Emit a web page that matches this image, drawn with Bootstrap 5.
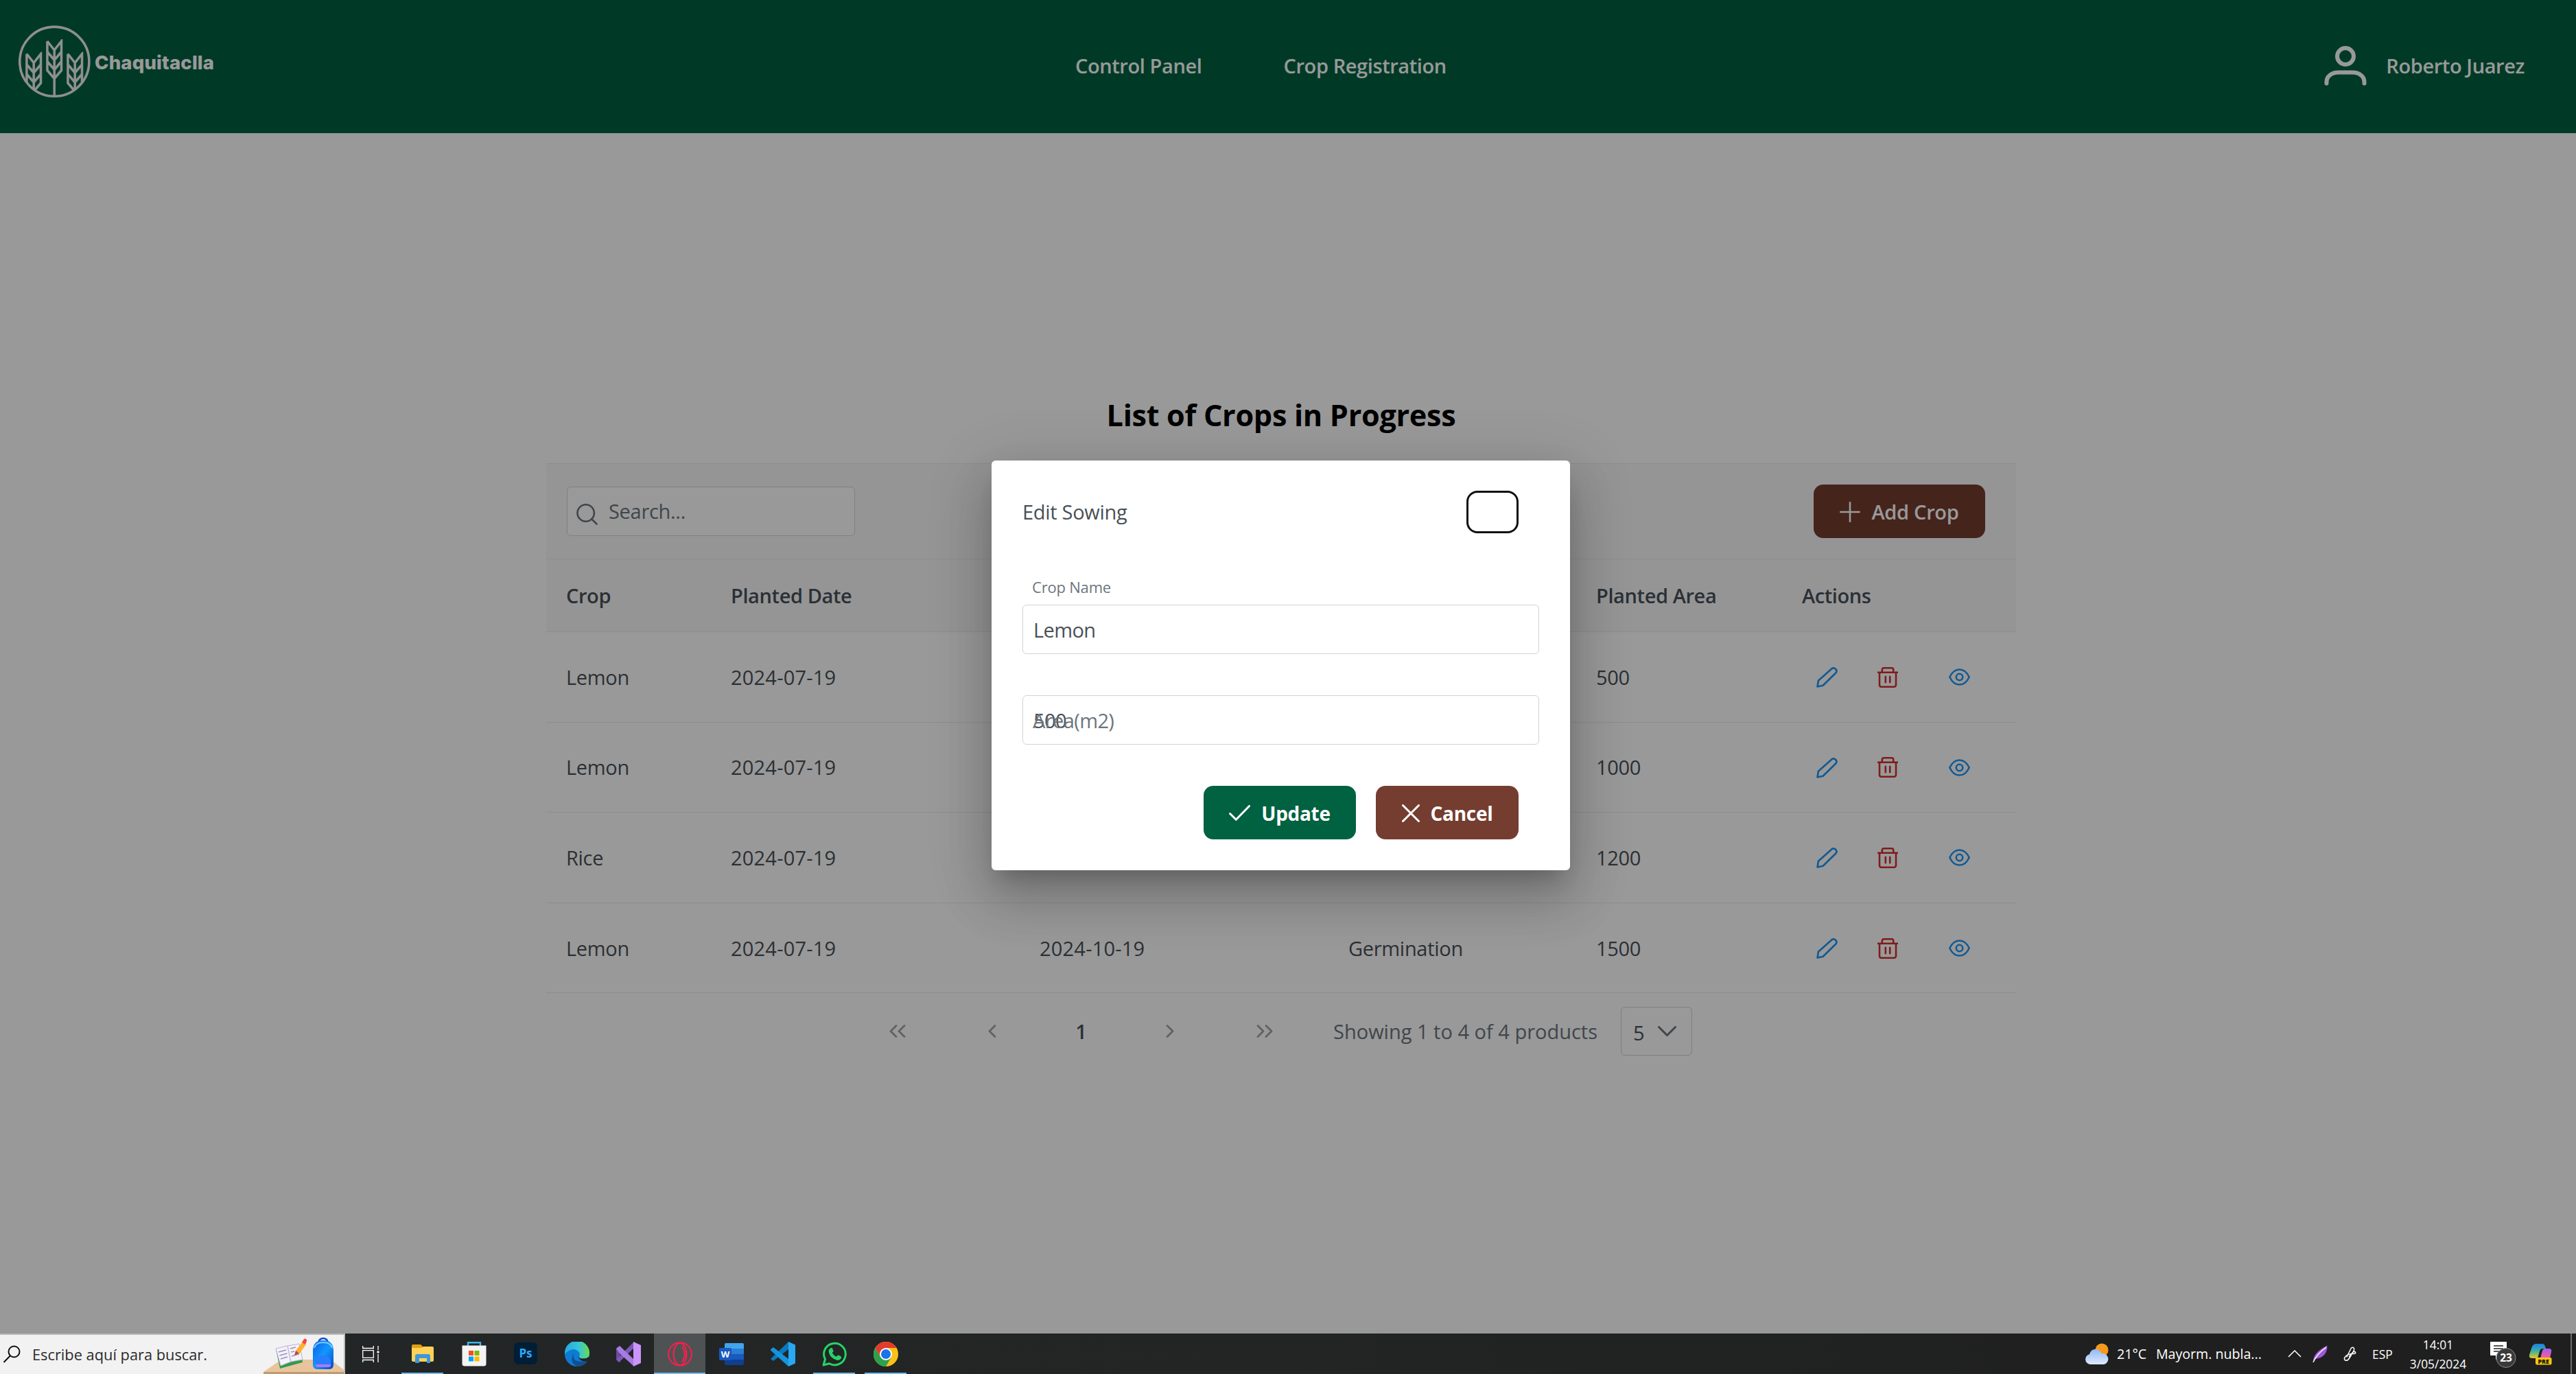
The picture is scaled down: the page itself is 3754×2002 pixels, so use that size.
<!DOCTYPE html>
<html lang="es">
<head>
<meta charset="utf-8">
<meta name="viewport" content="width=device-width, initial-scale=1">
<title>Chaquitaclla</title>
<link rel="stylesheet" href="https://cdn.jsdelivr.net/npm/bootstrap@5.3.0/dist/css/bootstrap.min.css">
<script src="https://cdn.jsdelivr.net/npm/bootstrap@5.3.0/dist/js/bootstrap.bundle.min.js"></script>
<style>
  body{font-family:"Open Sans","Noto Sans",sans-serif;font-size:29px;line-height:40px;color:#495057;background:#fff;letter-spacing:-.3px}
  svg{display:block;flex:none}
  .desktop{height:2002px;overflow:hidden}
  .app{height:1943px}
  .topbar{height:194px;background:#006241;color:#fff;font-weight:600;padding:0 75px 3px 27px;letter-spacing:-.4px}
  .brand-box{width:1540px;padding-bottom:12px}
  .brand-name{font-family:Inter,sans-serif;font-weight:800;font-size:27.5px;letter-spacing:.2px;margin-left:5px;padding-top:2px}
  .nav-gap{gap:119px}
  .page{padding:381px 20px 0 0}
  .page-title{font-size:43.2px;line-height:60px;font-weight:700;color:#000;margin:0 0 40px}
  .grid-box{width:2142px}
  .tools{height:140px;background:#f8f9fa;border-top:1px solid #e9ecef;border-bottom:1px solid #e9ecef;padding:0 45px 0 30px}
  .search-box{width:420px;height:72px;border:1px solid #ced4da;border-radius:6px;background:#fff;color:#6c757d;padding-left:13px}
  .act-btn{height:78px;border:0;border-radius:14px;color:#fff;font-size:29px;padding:1px 0 0;letter-spacing:-.3px}
  .bg-brown{background:#743d2f}
  .bg-leaf{background:#006241}
  .crops{table-layout:fixed;border-collapse:separate;border-spacing:0;width:2142px;margin:0;--bs-table-color:#495057;color:#495057}
  .crops>:not(caption)>*>*{padding:1px 0 0 29px;border-bottom:1px solid #e9ecef;vertical-align:middle}
  .crops thead th{height:106px;background:#f8f9fa;font-weight:600;letter-spacing:-.4px}
  .crops tbody td{height:131.6px}
  .crops .dt{letter-spacing:.2px}
  .c1{width:240px}.c2,.c3{width:450px}.c4{width:361px}.c5{width:300px}
  .i-pen{margin-left:21px}.i-bin{margin-left:58px}.i-eye{margin-left:74px}
  .pager{height:111px;padding-left:441px}
  .pg-a{width:142px}.pg-b{width:134px}.pg-c{width:125px}
  .pg-dim{opacity:.65}
  .pg-note{width:448px;padding-left:29px;color:#6c757d;letter-spacing:0}
  .pg-size{width:104px;height:71px;border:1px solid #ced4da;border-radius:6px;padding:4px 22px 0 17px}
  .veil{background:rgba(0,0,0,.4);padding:671px 21px 0 0}
  .dlg{width:843px;height:597px;background:#fff;border-radius:6px;padding:44px 45px 45px;
    box-shadow:0 21px 28px -13px rgba(0,0,0,.2),0 45px 71px 6px rgba(0,0,0,.14),0 17px 86px 15px rgba(0,0,0,.12)}
  .dlg-close{width:76px;height:62px;border:3px solid #111;border-radius:16px;background:#fff;padding:0;margin-right:30px}
  .lbl-up{font-size:22px;line-height:31px;color:#6c757d;margin:63px 0 10px 14px;letter-spacing:-.2px}
  .fld{height:72px;border:1px solid #ced4da;border-radius:6px;padding:1px 0 0 15px;letter-spacing:-.6px}
  .fld-2{margin-top:60px}
  .lbl-over{left:14px;top:16px;color:#6c757d}
  .dlg-btns{margin:60px 30px 0 0;gap:29px}
  .dlg-btns .act-btn{font-weight:700;font-size:28px}
  .taskbar{height:59px;background:linear-gradient(90deg,#232626 0,#222524 50%,#1f1f1f 85%);letter-spacing:0;color:#fff}
  .tb-search{width:503px;height:59px;background:#f2f2f2;border-top:2px solid #bbb;border-right:2px solid #bbb;color:#2b2b2b;font-size:21.8px}
  .tb-cell{width:75px;height:59px}
  .tb-live{background:#4f5253}
  .tb-on{position:relative}
  .tb-on::after{content:"";position:absolute;left:7px;right:7px;bottom:0;height:2px;background:#76b9ed}
  .tb-live.tb-on::after{left:0;right:0}
  .tb-wx{font-size:19.6px}
  .tb-esp{font-size:17.5px}
  .tb-clock{font-size:17.4px;line-height:28px;width:100px}
  .tb-end{width:2px;height:59px;background:#6c6c6c}
</style>
</head>
<body>
<svg width="0" height="0" class="position-absolute">
  <defs>
    <symbol id="pen" viewBox="0 0 30 30"><path d="M1.5 28.5 2.8 20 21.500 3.300a4.200 4.200 0 0 1 5.900 5.900L9.300 26.900Z" fill="none" stroke="#2196f3" stroke-width="2.600" stroke-linejoin="round"/></symbol>
    <symbol id="bin" viewBox="0 0 30 30"><path d="M.6 7.800h28.800M3 7.800v18.200a2.700 2.700 0 0 0 2.700 2.700h18.600a2.700 2.700 0 0 0 2.700-2.700V7.800M6.800 7.500V3.800A2.500 2.500 0 0 1 9.300 1.300h11.400a2.500 2.500 0 0 1 2.500 2.500v3.700M11.800 13.800v8.400M18.200 13.800v8.400" fill="none" stroke="#d32f2f" stroke-width="2.600" stroke-linecap="round"/></symbol>
    <symbol id="eye" viewBox="0 0 30 24"><path d="M1.300 12C4.500 5 9.300 1.300 15 1.300S25.500 5 28.700 12C25.500 19 20.700 22.700 15 22.700S4.500 19 1.300 12Z" fill="none" stroke="#2196f3" stroke-width="2.500"/><circle cx="15" cy="12" r="4.600" fill="none" stroke="#2196f3" stroke-width="2.500"/></symbol>
    <symbol id="ear" viewBox="0 0 26 84"><path d="M2.700 3v42.500L13 57.500l10.300-12V3L13 16 2.700 3M2.700 18.500 13 30.500l10.300-12M2.700 32.500 13 44.500l10.300-12M13 16v67" fill="none" stroke="#eee" stroke-width="3.500"/></symbol>
  </defs>
</svg>

<div class="desktop">
  <div class="app position-relative">
    <header class="topbar d-flex align-items-center">
      <div class="brand-box d-flex align-items-center">
        <svg width="106" height="106" viewBox="0 0 106 106">
          <clipPath id="disc"><circle cx="52.300" cy="52.700" r="51"/></clipPath>
          <circle cx="52.300" cy="52.700" r="50.600" fill="none" stroke="#eee" stroke-width="3.600"/>
          <g clip-path="url(#disc)">
            <use href="#ear" x="39.200" y="20" width="26" height="84"/>
            <use href="#ear" x="9.200" y="38.500" width="26" height="84"/>
            <use href="#ear" x="69.200" y="38.500" width="26" height="84"/>
          </g>
        </svg>
        <span class="brand-name">Chaquitaclla</span>
      </div>
      <nav class="d-flex nav-gap"><span>Control Panel</span><span>Crop Registration</span></nav>
      <div class="ms-auto d-flex align-items-center">
        <svg class="me-4" width="62" height="58" viewBox="0 0 62 58" fill="none" stroke="#fff" stroke-width="6" stroke-linecap="round"><circle cx="31" cy="15" r="12"/><path d="M3.500 54.500v-2C3.500 44 11 38.500 21 38.500h20c10 0 17.500 5.500 17.500 14v2"/></svg>
        <span class="ms-1">Roberto Juarez</span>
      </div>
    </header>

    <main class="page d-flex flex-column align-items-center">
      <h2 class="page-title">List of Crops in Progress</h2>
      <section class="grid-box">
        <div class="tools d-flex align-items-center justify-content-between">
          <div class="search-box d-flex align-items-center">
            <svg class="mt-2" width="31" height="31" viewBox="0 0 31 31" fill="none" stroke="#6c757d" stroke-width="2.600" stroke-linecap="round"><circle cx="13.700" cy="13.500" r="12.200"/><path d="m22.500 22.500 7 7"/></svg>
            <span class="ms-3">Search...</span>
          </div>
          <button class="act-btn bg-brown d-flex align-items-center justify-content-center fw-semibold" style="width:250px">
            <svg class="me-3" width="30" height="30" viewBox="0 0 30 30" stroke="#fff" stroke-width="2.600" stroke-linecap="round"><path d="M15 1.200v27.600M1.200 15h27.600"/></svg>Add Crop
          </button>
        </div>
        <table class="table crops">
          <thead><tr><th class="c1">Crop</th><th class="c2">Planted Date</th><th class="c3">Harvest Date</th><th class="c4">Phase</th><th class="c5">Planted Area</th><th>Actions</th></tr></thead>
          <tbody id="cropRows"></tbody>
        </table>
        <div class="pager d-flex align-items-center">
          <div class="pg-a pg-dim d-flex justify-content-center"><svg width="24" height="19" viewBox="0 0 24 19" fill="none" stroke="#6c757d" stroke-width="2.800" stroke-linecap="round" stroke-linejoin="round"><path d="m10 1.500-8 8 8 8M22 1.500l-8 8 8 8"/></svg></div>
          <div class="pg-b pg-dim d-flex justify-content-center"><svg width="12" height="19" viewBox="0 0 12 19" fill="none" stroke="#6c757d" stroke-width="2.800" stroke-linecap="round" stroke-linejoin="round"><path d="m10 1.500-8 8 8 8"/></svg></div>
          <div class="pg-c text-center fw-semibold">1</div>
          <div class="pg-b pg-dim d-flex justify-content-center"><svg width="12" height="19" viewBox="0 0 12 19" fill="none" stroke="#6c757d" stroke-width="2.800" stroke-linecap="round" stroke-linejoin="round"><path d="m2 1.500 8 8-8 8"/></svg></div>
          <div class="pg-a pg-dim d-flex justify-content-center"><svg width="24" height="19" viewBox="0 0 24 19" fill="none" stroke="#6c757d" stroke-width="2.800" stroke-linecap="round" stroke-linejoin="round"><path d="m2 1.500 8 8-8 8M14 1.500l8 8-8 8"/></svg></div>
          <div class="pg-note text-nowrap">Showing 1 to 4 of 4 products</div>
          <div class="pg-size d-flex align-items-center justify-content-between">5
            <svg class="mb-1" width="27" height="15" viewBox="0 0 27 15" fill="none" stroke="#6c757d" stroke-width="3" stroke-linecap="round" stroke-linejoin="round"><path d="m1.500 1.500 12 12 12-12"/></svg>
          </div>
        </div>
      </section>
    </main>

    <div class="veil position-absolute top-0 start-0 w-100 h-100 d-flex justify-content-center align-items-start">
      <div class="dlg">
        <div class="d-flex align-items-center justify-content-between"><span>Edit Sowing</span><button class="dlg-close" aria-label="Close"></button></div>
        <div class="lbl-up">Crop Name</div>
        <div class="fld d-flex align-items-center">Lemon</div>
        <div class="fld fld-2 d-flex align-items-center position-relative">500<span class="lbl-over position-absolute">Area(m2)</span></div>
        <div class="dlg-btns d-flex justify-content-end">
          <button class="act-btn bg-leaf d-flex align-items-center justify-content-center" style="width:222px">
            <svg class="me-3" width="31" height="23" viewBox="0 0 31 23" fill="none" stroke="#fff" stroke-width="3" stroke-linecap="round" stroke-linejoin="round"><path d="m1.500 12.500 8.800 8.800L29.500 1.500"/></svg>Update
          </button>
          <button class="act-btn bg-brown d-flex align-items-center justify-content-center" style="width:208px">
            <svg class="me-3" width="26" height="26" viewBox="0 0 26 26" stroke="#fff" stroke-width="3" stroke-linecap="round"><path d="m1.500 1.500 23 23M24.500 1.500l-23 23"/></svg>Cancel
          </button>
        </div>
      </div>
    </div>
  </div>

  <footer class="taskbar d-flex align-items-center">
    <div class="tb-search d-flex align-items-center">
      <svg class="ms-1" width="27" height="27" viewBox="0 0 27 27" fill="none" stroke="#111" stroke-width="2"><circle cx="16.500" cy="9.500" r="8"/><path d="M10.800 15.500 1.500 25"/></svg>
      <span class="ms-3 text-nowrap">Escribe aquí para buscar.</span>
      <svg class="ms-auto" width="117" height="57" viewBox="0 0 117 57">
        <defs><linearGradient id="bag" x1="0" x2="1" y1="0" y2="1"><stop offset="0" stop-color="#0a5be0"/><stop offset=".5" stop-color="#1398ff"/><stop offset="1" stop-color="#0448c8"/></linearGradient></defs>
        <path d="M0 54 26 36h72l19 15v3Z" fill="#e8c49c"/><path d="M0 54h117v3H0Z" fill="#c09a70"/>
        <path d="m18 21 6 28 33-9-1-7Z" fill="#2e9e48"/>
        <path d="m18 20 17-4 17 -3 5 23-17 3-15 6Z" fill="#f4f1fb" stroke="#b9b2d6"/>
        <path d="m35 16 5 24" stroke="#c3bcdc" stroke-width="1.500"/>
        <path d="m22 25 11-3M23.500 30l11-3M25 35l10-3M39 20l8-2M40 25l5-1M41 31l11-3" stroke="#9b93b8" stroke-width="1.500"/>
        <path d="m45 30 2-7L57 10l5 4-10 14Z" fill="#ffb02e"/><path d="m45 30 2-7 5 4Z" fill="#b04a5a"/><path d="m56 11 3-5q4-2 4 3l-2 5Z" fill="#f8443e"/>
        <path d="M80 14q0-9 7-9t7 9" fill="none" stroke="#0a4fd0" stroke-width="2.500"/>
        <path d="M72 23q0-15 15-15t15 15v20q0 7-6 7H78q-6 0-6-7Z" fill="url(#bag)"/>
        <path d="M74 19q2-8 13-8t13 8" fill="none" stroke="#7cc8ff" stroke-width="2"/>
        <path d="M76 46v-6q0-10 11-10t11 10v6Z" fill="#2a7cff"/><path d="M76 43h22v2q-1 2-3 2H79q-3 0-3-4Z" fill="#a87bff"/>
      </svg>
    </div>
    <div class="tb-cell d-flex align-items-center justify-content-center"><svg width="26" height="24" viewBox="0 0 26 24" fill="none" stroke="#fff" stroke-width="1.300"><path d="M.7 0v3.500h15.600V0M.7 24v-3.500h15.600V24M.7 6.700h15.600v10.600H.7ZM23 0v6M23 12v12"/><path d="M21.500 7.500h3v3h-3Z" fill="#fff" stroke="none"/></svg></div>
    <div class="tb-cell tb-on d-flex align-items-center justify-content-center"><svg width="32" height="28" viewBox="0 0 32 28"><path d="M0 2q0-2 2-2h11l3 3v5H0Z" fill="#e0a010"/><path d="M0 5h14l3-2h13q2 0 2 2v18q0 2-2 2H2q-2 0-2-2Z" fill="#ffd257"/><path d="M5 27V17q0-3 3-3h16q3 0 3 3v10h-5v-7H11v7Z" fill="#3c97dd"/></svg></div>
    <div class="tb-cell d-flex align-items-center justify-content-center"><svg width="36" height="36" viewBox="0 0 36 36"><path d="M9 9V1.200h18V9" fill="none" stroke="#37b6ee" stroke-width="2.400"/><path d="M.5 5.500h35V32q0 3.500-3.500 3.500H4Q.5 35.500.5 32Z" fill="#f3f3f3"/><path d="M10 13h7v7h-7Z" fill="#f25022"/><path d="M18.500 13h7v7h-7Z" fill="#7fba00"/><path d="M10 21.500h7v7h-7Z" fill="#00a4ef"/><path d="M18.500 21.500h7v7h-7Z" fill="#ffb900"/></svg></div>
    <div class="tb-cell d-flex align-items-center justify-content-center"><svg width="34" height="34" viewBox="0 0 34 34"><rect width="34" height="32" rx="6" fill="#001e36"/><text x="17" y="22" text-anchor="middle" font-size="17" font-weight="700" fill="#31a8ff">Ps</text></svg></div>
    <div class="tb-cell d-flex align-items-center justify-content-center"><svg width="36" height="36" viewBox="0 0 36 36"><defs><linearGradient id="edg" x1="0" x2="1"><stop offset="0" stop-color="#27a6e0"/><stop offset=".55" stop-color="#35c4dc"/><stop offset="1" stop-color="#66dd4e"/></linearGradient></defs><circle cx="18" cy="18" r="18" fill="#0f7ad2"/><path d="M0 18A18 18 0 0 1 36 15q1 9-8 9.500-8 .5-7-3 2-3-.5-7Q12 6 0 18Z" fill="url(#edg)"/><path d="M13 17q-3 15 19 11-5 8-14 8Q6 30 13 17Z" fill="#114f94"/><path d="M21 21.500q-1 3 7 3 4 0 7-2.500l2 3-4 3.500q-11 1-13-6Z" fill="#232626"/></svg></div>
    <div class="tb-cell d-flex align-items-center justify-content-center"><svg width="36" height="36" viewBox="0 0 36 36"><path d="M0 10 5 6l1 24-6-4Z" fill="#6a4ba0"/><path d="m4 30 22-21V0L6 20l-6 6Z" fill="#7d56bb"/><path d="M0 10 5 6l21 20v10L5 17Z" fill="#a77ce2"/><path d="m25 0 11 5v26l-11 5Z" fill="#cb94fb"/></svg></div>
    <div class="tb-cell tb-live tb-on d-flex align-items-center justify-content-center"><svg width="36" height="36" viewBox="0 0 36 36" fill="none" stroke="#fa1e4e" stroke-width="2"><circle cx="18" cy="18" r="16.800"/><ellipse cx="18" cy="18" rx="9.500" ry="16"/><path d="M21 7q8 11 0 22"/></svg></div>
    <div class="tb-cell d-flex align-items-center justify-content-center"><svg width="36" height="32" viewBox="0 0 36 32"><path d="M8 2q0-2 2-2h24q2 0 2 2v6H8Z" fill="#41a5ee"/><path d="M8 8h28v8H8Z" fill="#2b7cd3"/><path d="M8 16h28v8H8Z" fill="#185abd"/><path d="M8 24h28v6q0 2-2 2H10q-2 0-2-2Z" fill="#103f91"/><rect y="7" width="18" height="18" rx="2" fill="#185abd"/><text x="9" y="21" text-anchor="middle" font-size="13" font-weight="700" fill="#fff">W</text></svg></div>
    <div class="tb-cell d-flex align-items-center justify-content-center"><svg width="36" height="36" viewBox="0 0 36 36"><path d="m0 25 26-25v11L4 28Z" fill="#0a78bf"/><path d="m0 11 4-3 22 17v11L0 12.500Z" fill="#1494dc"/><path d="m26 0 10 4.500v27L26 36Z" fill="#2aa7f2"/></svg></div>
    <div class="tb-cell tb-on d-flex align-items-center justify-content-center"><svg width="36" height="36" viewBox="0 0 36 36"><path d="M2 34 4.500 25.500A15.800 15.800 0 1 1 10.500 31.700Z" fill="none" stroke="#25d366" stroke-width="3" stroke-linejoin="round"/><path d="M12 9.500q1.500-1.500 3 0l1.500 4q0 1-1.700 2.800 2.200 4 6.200 5.500 2-2.500 2.800-2.200l3.800 2q1 1 0 3-2 3-6 2.200-10.500-3-12-12.300 0-3.500 2.400-5Z" fill="#25d366"/></svg></div>
    <div class="tb-cell tb-on d-flex align-items-center justify-content-center"><svg width="36" height="36" viewBox="0 0 36 36"><circle cx="18" cy="18" r="18" fill="#fbc116"/><path d="M2.400 9A18 18 0 0 1 33.600 9H18L10.200 22.500Z" fill="#e33b2e"/><path d="M2.400 9A18 18 0 0 0 18 36l7.800-13.500-15.600 0Z" fill="#2da14c"/><circle cx="18" cy="18" r="9" fill="#fff"/><circle cx="18" cy="18" r="7" fill="#1a73e8"/></svg></div>

    <div class="ms-auto d-flex align-items-center">
      <svg width="36" height="32" viewBox="0 0 36 32"><defs><linearGradient id="cl" x2="0" y2="1"><stop offset="0" stop-color="#8fb8f5"/><stop offset="1" stop-color="#dfeafc"/></linearGradient></defs><circle cx="25" cy="10" r="9.500" fill="#f79a1c"/><path d="M8 31a7.500 7.500 0 0 1-1-14.800 9 9 0 0 1 17.500-1A8 8 0 0 1 28 31Z" fill="url(#cl)"/></svg>
      <div class="tb-wx text-nowrap d-flex"><span style="width:57px;padding-left:11px">21°C</span><span class="text-nowrap" style="width:203px;padding-left:11px">Mayorm. nubla...</span></div>
      <svg width="20" height="11" viewBox="0 0 20 11" fill="none" stroke="#fff" stroke-width="1.500"><path d="m1 10 9-9 9 9"/></svg>
      <svg class="ms-3" width="22" height="26" viewBox="0 0 22 26"><path d="M1 25Q0 11 21.500.5 22 13 12 18L5 20Z" fill="#a258d6"/><path d="M1 25Q6 13 20 3" fill="none" stroke="#efe0fb" stroke-width="1.600"/></svg>
      <svg width="62" height="22" viewBox="0 0 62 22" fill="none" stroke="#fff" stroke-width="1.500" stroke-linecap="round"><path d="M34.500 2q3-2 4 1 .5 1.500-.5 3.500l-6 10q-3 5-6.500 3.500-2.500-3 1-6 4-3.500 10-3.500 5 .5 4-2.500-2-1.500-4 .5l-5 6M34.500 2l-6.500 13"/></svg>
      <span class="tb-esp" style="width:49px;padding-left:3px">ESP</span>
      <div class="tb-clock text-center"><div>14:01</div><div>3/05/2024</div></div>
      <svg width="38" height="42" viewBox="0 0 38 42" style="margin:2px 19px 0 26px"><path d="M0 2h24v20h-9l-7 6v-6H0Z" fill="#fff"/><path d="M5 8h14M5 12h14M5 16h14" stroke="#1f1f1f" stroke-width="1.300"/><circle cx="23" cy="25.500" r="14" fill="#3a3a3a" stroke="#8a8a8a"/><text x="23" y="31" text-anchor="middle" font-size="15.500" font-weight="700" fill="#fff">23</text></svg>
      <svg width="33" height="32" viewBox="0 0 33 32"><defs><linearGradient id="cp" x2="0" y2="1"><stop offset="0" stop-color="#1b7ff0"/><stop offset=".5" stop-color="#3cb39a"/><stop offset="1" stop-color="#e9c22b"/></linearGradient><linearGradient id="cq" x2="0" y2="1"><stop offset="0" stop-color="#a35cf0"/><stop offset="1" stop-color="#f5609a"/></linearGradient></defs><path d="M10 1h9q3 0 4 4l1 3h-5q-3 0-4 4l-3 10H4q-5 0-4-5L4 5q2-4 6-4Z" fill="url(#cp)"/><path d="M22 8h7q4 0 3 5l-2 9H16l3-11q1-3 3-3Z" fill="url(#cq)"/><rect x="9" y="21" width="23.500" height="10.500" rx="2" fill="#ffc80a"/><text x="20.700" y="29.500" text-anchor="middle" font-size="8.800" font-weight="800" fill="#111">PRE</text></svg>
      <div class="tb-end" style="margin:0 6px 0 27px"></div>
    </div>
  </footer>
</div>
<script>
  const crops = [
    ['Lemon','2024-07-19','2024-10-19','Germination',500],
    ['Lemon','2024-07-19','2024-10-19','Germination',1000],
    ['Rice','2024-07-19','2024-10-19','Germination',1200],
    ['Lemon','2024-07-19','2024-10-19','Germination',1500]
  ];
  document.getElementById('cropRows').innerHTML = crops.map(c => `<tr><td>${c[0]}</td><td class="dt">${c[1]}</td><td class="dt">${c[2]}</td><td>${c[3]}</td><td>${c[4]}</td><td><div class="d-flex align-items-center"><svg class="i-pen" width="31" height="31"><use href="#pen"/></svg><svg class="i-bin" width="30" height="30"><use href="#bin"/></svg><svg class="i-eye" width="31" height="25"><use href="#eye"/></svg></div></td></tr>`).join('');
</script>
</body>
</html>
